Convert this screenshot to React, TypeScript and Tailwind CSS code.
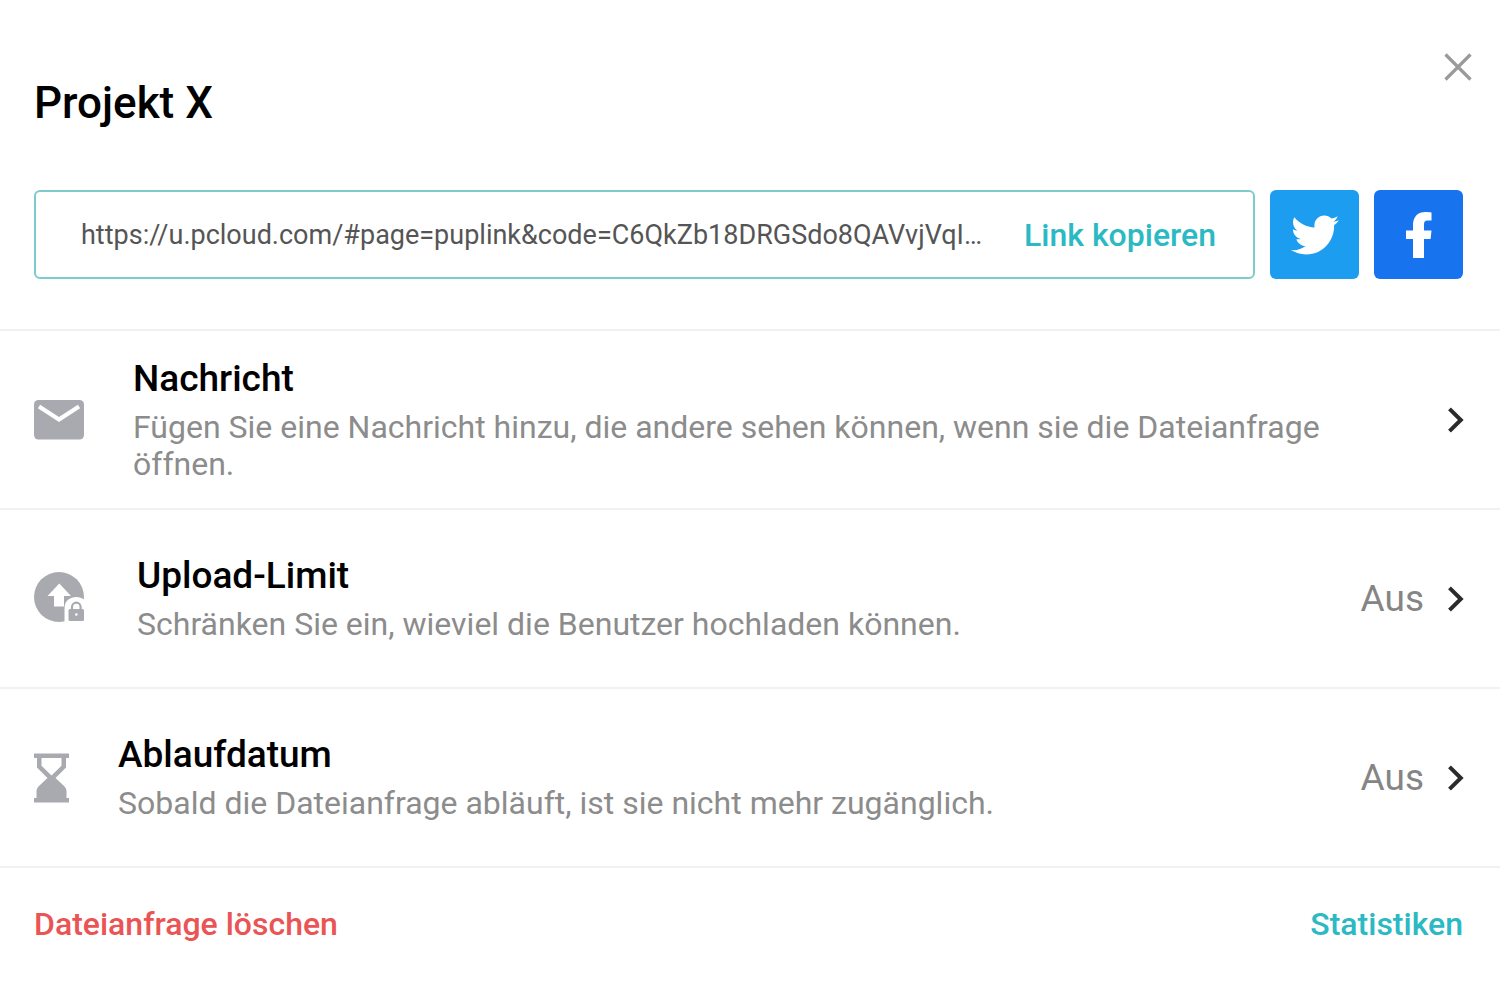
import React, { useState } from 'react';
import { FaTwitter } from 'react-icons/fa';

const SHARE_LINK = 'https://u.pcloud.com/#page=puplink&code=C6QkZb18DRGSdo8QAVvjVqI…';

interface SettingRowProps {
  icon: React.ReactNode;
  title: string;
  description: string;
  status?: string;
}

const CloseIcon = () => (
  <svg className="w-7 h-7" viewBox="0 0 28 28" fill="none" stroke="currentColor" strokeWidth="3.2">
    <path d="M1.5 1.5l25 25M26.5 1.5l-25 25" />
  </svg>
);

const FacebookIcon = () => (
  <svg className="w-[26px] h-[46px]" viewBox="0 0 26 46" fill="currentColor">
    <path d="M7 46V27H0v-8.500h7V13C7 4.500 12 0 19.500 0c2.500 0 4.500.2 6 .5V8.500h-3.700C18.800 8.500 18 10 18 12.500v6h7.500L24.600 27H18v19z" />
  </svg>
);

const ChevronIcon = () => (
  <svg className="w-4 h-[26px] shrink-0" viewBox="0 0 16 26" fill="none" stroke="currentColor" strokeWidth="4">
    <path d="M1.500 1.800L12.800 13 1.500 24.200" />
  </svg>
);

const MailIcon = () => (
  <svg className="w-[50px] h-10" viewBox="0 0 50 40">
    <rect width="50" height="39.500" rx="4.500" fill="currentColor" />
    <path d="M5 6.500L25 19.500 45 6.500" fill="none" stroke="#fff" strokeWidth="4.200" />
  </svg>
);

const UploadLimitIcon = () => (
  <svg className="w-[50px] h-[54px]" viewBox="0 0 50 54">
    <circle cx="25" cy="25" r="25" fill="currentColor" />
    <path d="M25.300 11.500L37 24h-7v10.500H20V24h-6.500z" fill="#fff" />
    {/* white cut-out behind the lock */}
    <path d="M30.500 51V36.500C30.500 29 35.500 25 42.500 25c4 0 6.500 1.500 9.500 4v22z" fill="#fff" />
    <rect x="34.500" y="37" width="15.500" height="12" rx="1.500" fill="currentColor" />
    <path d="M38 38v-3a4.300 4.300 0 0 1 8.600 0v3" fill="none" stroke="currentColor" strokeWidth="2.200" />
    <circle cx="42.300" cy="42.500" r="1.300" fill="#fff" />
  </svg>
);

const HourglassIcon = () => (
  <svg className="w-[35px] h-[50px]" viewBox="0 0 35 50" fill="currentColor">
    <path
      fillRule="evenodd"
      d="M0 .5h35V5h-3v9.500L21.500 25 30 33c2 2 2.500 3.500 2.500 6v6H35v4.500H0V45h2.500v-6c0-2.500.5-4 2.500-6l8.500-8L3 14.500V5H0zM7.500 5v7.800l10 9.700 10-9.700V5z"
    />
  </svg>
);

const SettingRow: React.FC<SettingRowProps> = ({ icon, title, description, status }) => (
  <li className="border-t-2 border-[#f1f1f1]">
    <button type="button" className="flex w-full min-h-[177px] items-center pl-[34px] pr-9 text-left">
      <span className="shrink-0 text-[#a9a9b0]">{icon}</span>
      <span className="flex-1 pr-24">
        <span className="block text-[37px] leading-[44px] font-medium text-black">{title}</span>
        <span className="block pt-2 text-[32px] leading-[37px] text-[#8c8c8c]">{description}</span>
      </span>
      {status && <span className="pr-6 text-[37px] leading-[44px] text-[#858585]">{status}</span>}
      <span className="text-[#2b2b2b]">
        <ChevronIcon />
      </span>
    </button>
  </li>
);

export default function App() {
  const [open, setOpen] = useState(true);

  const handleCopy = async () => {
    try {
      await navigator.clipboard.writeText(SHARE_LINK);
    } catch (error) {
      console.error('Failed to copy link:', error);
    }
  };

  if (!open) {
    return null;
  }

  return (
    <main className="min-h-screen bg-white font-[Roboto,sans-serif]">
      <header className="flex items-start justify-between pt-[53px] pl-[34px] pr-7">
        <h1 className="pt-6 text-[44px] leading-[52px] font-medium text-black">Projekt X</h1>
        <button type="button" onClick={() => setOpen(false)} aria-label="Schließen" className="text-[#9a9a9a]">
          <CloseIcon />
        </button>
      </header>

      {/* Share link */}
      <div className="flex gap-[15px] pt-[61px] pb-[50px] pl-[34px] pr-[37px]">
        <div className="flex h-[89px] flex-1 items-center rounded-md border-2 border-[#7dcbcd] pl-[45px] pr-[37px]">
          <input
            type="text"
            readOnly
            value={SHARE_LINK}
            aria-label="Freigabelink"
            className="min-w-0 flex-1 text-[27px] leading-8 text-[#555555] outline-none"
          />
          <button type="button" onClick={handleCopy} className="pl-6 text-[32px] leading-10 font-medium text-[#2bb9c3]">
            Link kopieren
          </button>
        </div>
        <button
          type="button"
          aria-label="Auf Twitter teilen"
          className="flex size-[89px] items-center justify-center rounded-md bg-[#1c9df0] text-white"
        >
          <FaTwitter className="size-12" />
        </button>
        <button
          type="button"
          aria-label="Auf Facebook teilen"
          className="flex size-[89px] items-center justify-center rounded-md bg-[#1873ee] text-white"
        >
          <FacebookIcon />
        </button>
      </div>

      <ul>
        <SettingRow
          icon={<span className="block pr-[49px]"><MailIcon /></span>}
          title="Nachricht"
          description="Fügen Sie eine Nachricht hinzu, die andere sehen können, wenn sie die Dateianfrage öffnen."
        />
        <SettingRow
          icon={<span className="block pr-[53px]"><UploadLimitIcon /></span>}
          title="Upload-Limit"
          description="Schränken Sie ein, wieviel die Benutzer hochladen können."
          status="Aus"
        />
        <SettingRow
          icon={<span className="block pr-[49px]"><HourglassIcon /></span>}
          title="Ablaufdatum"
          description="Sobald die Dateianfrage abläuft, ist sie nicht mehr zugänglich."
          status="Aus"
        />
      </ul>

      <footer className="flex items-center justify-between border-t-2 border-[#f1f1f1] pt-9 pb-12 pl-[34px] pr-[37px] text-[32px] leading-10 font-medium">
        <button type="button" className="text-[#ea5455]">
          Dateianfrage löschen
        </button>
        <button type="button" className="text-[#2bb9c3]">
          Statistiken
        </button>
      </footer>
    </main>
  );
}
